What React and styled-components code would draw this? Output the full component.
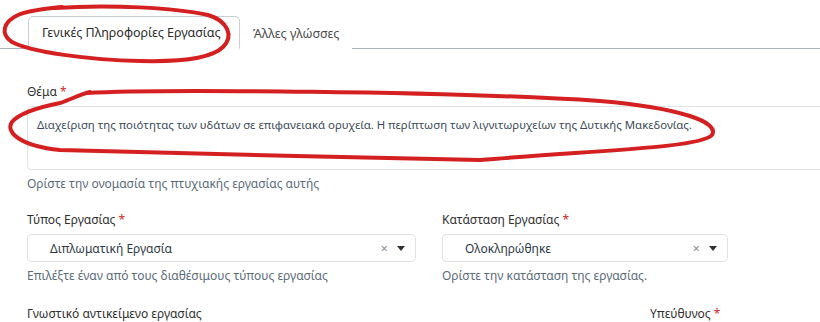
import React from "react";
import styled, { createGlobalStyle } from "styled-components";

const GlobalStyle = createGlobalStyle`
  html, body {
    margin: 0;
    padding: 0;
    background: #fff;
  }
  body {
    font-family: 'Noto Sans', 'Open Sans', sans-serif;
    color: #333;
  }
`;

const Page = styled.div`
  position: relative;
  width: 820px;
  height: 322px;
  overflow: hidden;
  padding-top: 16px;
  box-sizing: border-box;
`;

const TabBar = styled.div`
  display: flex;
  padding-left: 28px;
  border-bottom: 1px solid #a9b4b8;
  height: 33px;
  box-sizing: border-box;
`;

const Tab = styled.div`
  height: 33px;
  box-sizing: border-box;
  display: flex;
  align-items: center;
  white-space: nowrap;
  padding: 0 ${(p) => (p.$active ? "13px" : "12px")};
  font-size: 12.5px;
  color: ${(p) => (p.$active ? "#2b2b2b" : "#4a4a4a")};
  background: #fff;
  border: 1px solid ${(p) => (p.$active ? "#c8ced1" : "transparent")};
  border-bottom: ${(p) => (p.$active ? "1px solid #fff" : "none")};
  border-radius: 5px 5px 0 0;
  margin-bottom: -1px;
  width: ${(p) => (p.$width ? `${p.$width}px` : "auto")};
`;

const Form = styled.div`
  padding: 35px 0 0 27px;
  display: flex;
  flex-direction: column;
`;

const Field = styled.div`
  display: flex;
  flex-direction: column;
`;

const Label = styled.label`
  font-size: 12px;
  color: #2f2f2f;
  line-height: 16px;
  margin-bottom: 6px;

  span {
    color: #d02a2a;
  }
`;

const TextArea = styled.div`
  width: 820px;
  height: 64px;
  box-sizing: border-box;
  border: 1px solid #e0e3e6;
  border-radius: 4px;
  padding: 10px 9px;
  font-size: 11.4px;
  line-height: 16px;
  color: #3d4a56;
`;

const Help = styled.div`
  font-size: 12px;
  line-height: 16px;
  color: #5b6b79;
  margin-top: 6px;
`;

const Row = styled.div`
  display: grid;
  grid-template-columns: 389px 286px;
  column-gap: 26px;
  margin-top: 20px;
`;

const Select = styled.div`
  height: 28px;
  box-sizing: border-box;
  border: 1px solid #e0e3e6;
  border-radius: 4px;
  display: flex;
  align-items: center;
  padding: 0 10px 0 22px;
  font-size: 12px;
  color: #2f3a44;
`;

const SelectValue = styled.div`
  flex: 1;
`;

const Clear = styled.span`
  color: #8a8f94;
  font-size: 13px;
  margin-right: 9px;
`;

const Caret = styled.svg`
  width: 8px;
  height: 5px;
`;

const BottomRow = styled.div`
  display: grid;
  grid-template-columns: 623px 1fr;
  margin-top: 22px;
  font-size: 12px;
  line-height: 16px;
  color: #2f2f2f;

  span {
    color: #d02a2a;
  }
`;

const Marks = styled.svg`
  position: absolute;
  left: 0;
  top: 0;
  width: 820px;
  height: 322px;
  pointer-events: none;
`;

const Picker = ({ value }) => (
  <Select>
    <SelectValue>{value}</SelectValue>
    <Clear>×</Clear>
    <Caret viewBox="0 0 8 5">
      <path d="M0 0 L8 0 L4 5 Z" fill="#333" />
    </Caret>
  </Select>
);

export default function App() {
  return (
    <>
      <GlobalStyle />
      <Page>
        <TabBar>
          <Tab $active $width={212}>Γενικές Πληροφορίες Εργασίας</Tab>
          <Tab>Άλλες γλώσσες</Tab>
        </TabBar>
        <Form>
          <Field>
            <Label>Θέμα <span>*</span></Label>
            <TextArea>
              Διαχείριση της ποιότητας των υδάτων σε επιφανειακά ορυχεία. Η περίπτωση των λιγνιτωρυχείων της Δυτικής Μακεδονίας.
            </TextArea>
            <Help>Ορίστε την ονομασία της πτυχιακής εργασίας αυτής</Help>
          </Field>
          <Row>
            <Field>
              <Label>Τύπος Εργασίας <span>*</span></Label>
              <Picker value="Διπλωματική Εργασία" />
              <Help>Επιλέξτε έναν από τους διαθέσιμους τύπους εργασίας</Help>
            </Field>
            <Field>
              <Label>Κατάσταση Εργασίας <span>*</span></Label>
              <Picker value="Ολοκληρώθηκε" />
              <Help>Ορίστε την κατάσταση της εργασίας.</Help>
            </Field>
          </Row>
          <BottomRow>
            <div>Γνωστικό αντικείμενο εργασίας</div>
            <div>Υπεύθυνος <span>*</span></div>
          </BottomRow>
        </Form>
        <Marks viewBox="0 0 820 322">
          <path
            d="M55 8 C110 4, 175 8, 208 15 C228 21, 234 36, 223 47 C212 58, 180 62, 140 61 C90 60, 30 52, 12 42 C0 34, 3 22, 18 15 C30 10, 45 9, 62 7"
            fill="none"
            stroke="#d42020"
            strokeWidth="4"
            strokeLinecap="round"
          />
          <path
            d="M87 93 C150 89, 450 91, 600 101 C680 108, 720 122, 712 135 C700 148, 600 150, 480 160 C350 158, 150 152, 60 150 C20 146, 5 132, 12 122 C20 112, 45 106, 60 103 C70 100, 78 95, 90 92"
            fill="none"
            stroke="#d42020"
            strokeWidth="4"
            strokeLinecap="round"
          />
        </Marks>
      </Page>
    </>
  );
}
